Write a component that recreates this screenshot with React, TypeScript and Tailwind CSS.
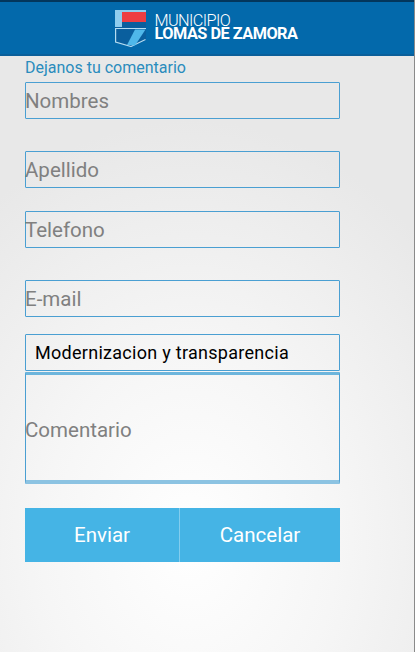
function Field({ label, className }: { label: string; className: string }) {
  return (
    <div className={"flex h-[37px] w-[315px] items-center rounded-[1px] border border-[#4a9fd2] pt-[2px] -indent-[1px] text-[20.500px] text-[#808080] " + className}>
      {label}
    </div>
  );
}

function Logo() {
  return (
    <svg width="31" height="37" viewBox="0 0 31 37" className="mt-[1px]">
      {/* shield */}
      <path d="M0 0H31V30L16 37L0 32Z" fill="#0a5f9e" />
      <path d="M0 0H31V2H7V17H0Z" fill="#8fcdee" />
      <rect x="7" y="2" width="24" height="10" fill="#ee3d42" />
      {/* lower half */}
      <path d="M0 18.500H31M0.600 18.500V32L16 36.500L30.500 29.500" fill="none" stroke="#b5dcf1" strokeWidth="1.200" />
      <path d="M20 19.500H30.500L20 35.500L12 35Z" fill="#4fb8ea" />
    </svg>
  );
}

export default function App() {
  return (
    <div className="relative h-[652px] w-[415px] overflow-hidden bg-[radial-gradient(ellipse_330px_420px_at_190px_540px,#ffffff_0%,#f6f6f6_45%,#e8e8e8_100%)] font-['Roboto',sans-serif]">
      <header className="flex h-[56px] items-center justify-center gap-[9px] border-t-2 border-b-2 border-t-[#03365c] border-b-[#0a5f9a] bg-[#0369ab] pr-[3px]">
        <Logo />
        <div className="-mt-[2px] flex flex-col text-white">
          <span className="text-[16.300px] leading-[13.500px] font-light tracking-[-0.6px]">MUNICIPIO</span>
          <span className="text-[16.300px] leading-[13.500px] font-bold tracking-[-0.5px]">LOMAS DE ZAMORA</span>
        </div>
      </header>

      <main className="flex flex-col pl-[25px]">
        <p className="mt-[2px] h-[24px] pt-[1px] text-[16px] leading-[18px] text-[#2a8cbd]">Dejanos tu comentario</p>
        <Field label="Nombres" className="" />
        <Field label="Apellido" className="mt-[32px]" />
        <Field label="Telefono" className="mt-[23px]" />
        <Field label="E-mail" className="mt-[32px]" />
        <div className="mt-[17px] flex h-[37px] w-[315px] items-center rounded-[1px] border border-[#4a9fd2] pl-[9px] text-[18px] tracking-[0.28px] text-black">
          Modernizacion y transparencia
        </div>
        <div className="mt-[1px] flex h-[112px] w-[315px] items-center rounded-[1px] border border-t-[3px] border-b-[4px] border-[#4a9fd2] border-t-[#6db5dc] border-b-[#8cc3e2] -indent-[1px] text-[20.500px] text-[#808080]">
          <span className="pt-[5px]">Comentario</span>
        </div>
        <div className="mt-[24px] flex h-[54px] w-[315px] bg-[#45b4e5] text-[20.500px] text-white">
          <button className="flex w-[155px] items-center justify-center border-r border-[#83cdee]">Enviar</button>
          <button className="flex flex-1 items-center justify-center">Cancelar</button>
        </div>
      </main>

      <div className="absolute top-0 right-0 h-full w-[1px] bg-[#8a8a8a]" />
    </div>
  );
}
